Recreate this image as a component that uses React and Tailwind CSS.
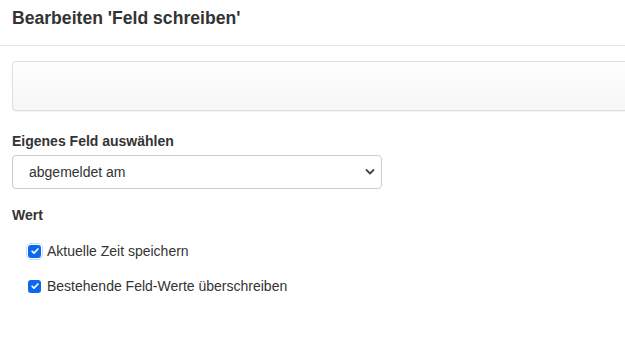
import React from 'react';

function Check({ focused }) {
  return (
    <span
      className={`inline-flex items-center justify-center w-[13px] h-[13px] rounded-[3px] bg-[#0b69ee] shrink-0 ${
        focused ? 'outline outline-1 outline-offset-1 outline-[#c4daf7]' : ''
      }`}
    >
      <svg viewBox="0 0 12 12" className="w-[10px] h-[10px]" fill="none" stroke="white" strokeWidth="2" strokeLinecap="round" strokeLinejoin="round">
        <path d="M2.5 6.3l2.3 2.3L9.5 3.6" />
      </svg>
    </span>
  );
}

export default function App() {
  return (
    <div className="w-[625px] h-[341px] overflow-hidden bg-white text-[#333] font-['Liberation_Sans',Arial,sans-serif]">
      {/* modal header */}
      <div className="h-[46px] border-b border-[#e5e5e5] pl-3 pt-[8px]">
        <h4 className="text-[17.6px] leading-[20px] font-bold">Bearbeiten 'Feld schreiben'</h4>
      </div>

      <div className="pl-3 pt-[15px]">
        {/* empty well */}
        <div className="w-[640px] h-[50px] rounded-[4px] border border-[#dedede] bg-gradient-to-b from-[#fefefe] to-[#f6f6f6] shadow-[0_1px_1px_rgba(0,0,0,0.05)]"></div>

        {/* field select */}
        <div className="mt-[20px]">
          <label className="block text-[14px] leading-[20px] font-bold mb-[4px]">Eigenes Feld auswählen</label>
          <div className="relative w-[370px] h-[34px] rounded-[4px] border border-[#cccccc] bg-white flex items-center pl-[16px] text-[14px] text-[#333]">
            abgemeldet am
            <svg className="absolute right-[6px] top-[12px] w-[10px] h-[8px]" viewBox="0 0 10 8" fill="none" stroke="#444" strokeWidth="1.8" strokeLinecap="round" strokeLinejoin="round">
              <path d="M1.5 2l3.5 3.5L8.5 2" />
            </svg>
          </div>
        </div>

        {/* value */}
        <div className="mt-[16px]">
          <div className="text-[14px] leading-[20px] font-bold">Wert</div>
          <div className="pl-[16px] mt-[16px] flex flex-col gap-[15px] text-[14px] leading-[20px]">
            <label className="flex items-center gap-[6px]">
              <Check focused />
              <span>Aktuelle Zeit speichern</span>
            </label>
            <label className="flex items-center gap-[6px]">
              <Check />
              <span>Bestehende Feld-Werte überschreiben</span>
            </label>
          </div>
        </div>
      </div>
    </div>
  );
}
